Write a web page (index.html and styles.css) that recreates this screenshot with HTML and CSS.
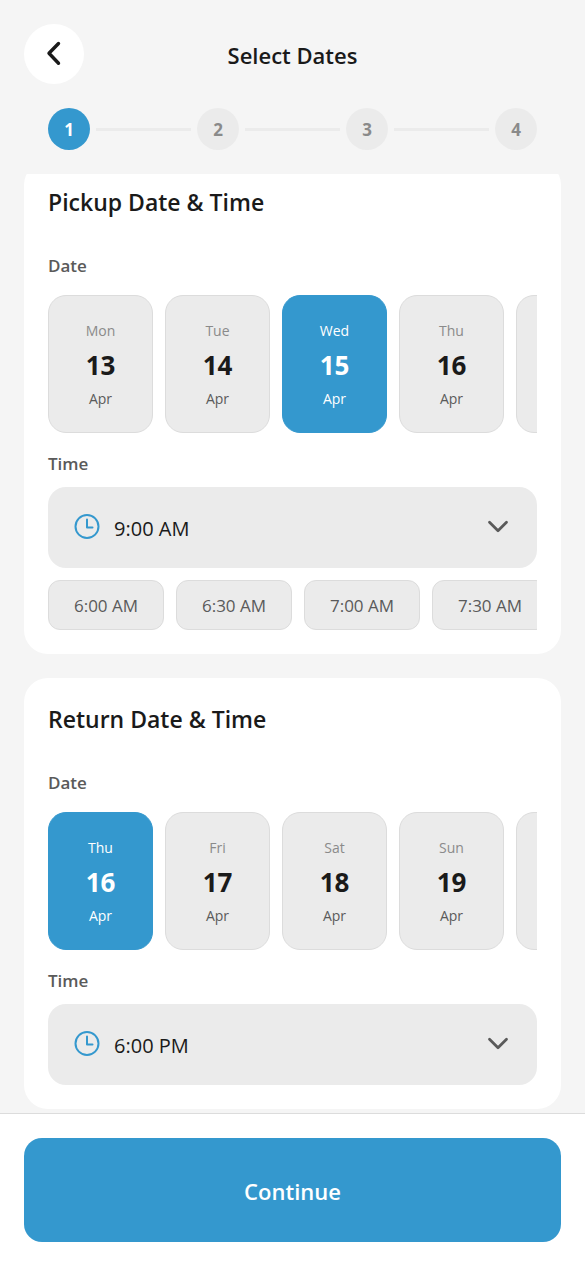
FILE: index.html
```html
<!DOCTYPE html>
<html lang="en">
<head>
    <meta charset="UTF-8">
    <meta name="viewport" content="width=device-width, initial-scale=1.0">
    <title>Select Dates</title>
    <link rel="stylesheet" href="styles.css">
</head>
<body>
    <header class="header">
        <button type="button" class="back-btn" aria-label="Back">
            <svg width="30" height="30" viewBox="0 0 30 30" fill="none" stroke="currentColor" stroke-width="3.4" stroke-linecap="round" stroke-linejoin="round">
                <path d="M19.5 4.5 L10 14.3 L19.5 24.2"/>
            </svg>
        </button>
        <h1>Select Dates</h1>
    </header>

    <div class="steps">
        <div class="step active">1</div>
        <div class="step-line"></div>
        <div class="step">2</div>
        <div class="step-line"></div>
        <div class="step">3</div>
        <div class="step-line"></div>
        <div class="step">4</div>
    </div>

    <main class="content" id="content">
        <section class="card">
            <h2>Pickup Date &amp; Time</h2>
            <h3 class="label">Date</h3>
            <div class="dates">
                <button type="button" class="date"><span class="day">Mon</span><span class="num">13</span><span class="month">Apr</span></button>
                <button type="button" class="date"><span class="day">Tue</span><span class="num">14</span><span class="month">Apr</span></button>
                <button type="button" class="date active"><span class="day">Wed</span><span class="num">15</span><span class="month">Apr</span></button>
                <button type="button" class="date"><span class="day">Thu</span><span class="num">16</span><span class="month">Apr</span></button>
                <button type="button" class="date"><span class="day">Fri</span><span class="num">17</span><span class="month">Apr</span></button>
            </div>
            <label class="label" for="pickupTime">Time</label>
            <div class="time-select">
                <svg class="clock" width="30" height="30" viewBox="0 0 30 30" fill="none" stroke="currentColor" stroke-width="2" stroke-linecap="round" stroke-linejoin="round">
                    <circle cx="15" cy="15.5" r="11.5"/>
                    <path d="M15 8.5 V16.5 H20.5"/>
                </svg>
                <select id="pickupTime">
                    <option>6:00 AM</option>
                    <option>6:30 AM</option>
                    <option>7:00 AM</option>
                    <option>7:30 AM</option>
                    <option selected>9:00 AM</option>
                </select>
                <svg class="chevron" width="30" height="30" viewBox="0 0 30 30" fill="none" stroke="currentColor" stroke-width="2.8" stroke-linecap="round" stroke-linejoin="round">
                    <path d="M6.5 11.3 L15 19.8 L23.5 11.3"/>
                </svg>
            </div>
            <div class="times">
                <button type="button" class="time">6:00 AM</button>
                <button type="button" class="time">6:30 AM</button>
                <button type="button" class="time">7:00 AM</button>
                <button type="button" class="time">7:30 AM</button>
            </div>
        </section>

        <section class="card">
            <h2>Return Date &amp; Time</h2>
            <h3 class="label">Date</h3>
            <div class="dates">
                <button type="button" class="date active"><span class="day">Thu</span><span class="num">16</span><span class="month">Apr</span></button>
                <button type="button" class="date"><span class="day">Fri</span><span class="num">17</span><span class="month">Apr</span></button>
                <button type="button" class="date"><span class="day">Sat</span><span class="num">18</span><span class="month">Apr</span></button>
                <button type="button" class="date"><span class="day">Sun</span><span class="num">19</span><span class="month">Apr</span></button>
                <button type="button" class="date"><span class="day">Mon</span><span class="num">20</span><span class="month">Apr</span></button>
            </div>
            <label class="label" for="returnTime">Time</label>
            <div class="time-select">
                <svg class="clock" width="30" height="30" viewBox="0 0 30 30" fill="none" stroke="currentColor" stroke-width="2" stroke-linecap="round" stroke-linejoin="round">
                    <circle cx="15" cy="15.5" r="11.5"/>
                    <path d="M15 8.5 V16.5 H20.5"/>
                </svg>
                <select id="returnTime">
                    <option>5:30 PM</option>
                    <option selected>6:00 PM</option>
                    <option>6:30 PM</option>
                </select>
                <svg class="chevron" width="30" height="30" viewBox="0 0 30 30" fill="none" stroke="currentColor" stroke-width="2.8" stroke-linecap="round" stroke-linejoin="round">
                    <path d="M6.5 11.3 L15 19.8 L23.5 11.3"/>
                </svg>
            </div>
        </section>
    </main>

    <footer class="footer">
        <button type="button" class="continue-btn">Continue</button>
    </footer>

    <script>
        document.getElementById('content').scrollTop = 13;

        document.querySelectorAll('.dates').forEach(row => {
            row.addEventListener('click', e => {
                const date = e.target.closest('.date');
                if (!date) return;
                row.querySelectorAll('.date').forEach(d => d.classList.remove('active'));
                date.classList.add('active');
            });
        });

        document.querySelectorAll('.time').forEach(btn => {
            btn.addEventListener('click', () => {
                document.getElementById('pickupTime').value = btn.textContent;
            });
        });
    </script>
</body>
</html>
```
FILE: styles.css
```css
* {
    margin: 0;
    padding: 0;
    box-sizing: border-box;
    font-family: "Segoe UI", "Open Sans", "Noto Sans", sans-serif;
}

body {
    display: flex;
    flex-direction: column;
    height: 100vh;
    background-color: #f5f5f5;
    color: #1a1a1a;
}

button {
    border: none;
    cursor: pointer;
}

.header {
    display: grid;
    grid-template-columns: 60px 1fr 60px;
    align-items: center;
    padding: 24px 24px 0;
}

.header h1 {
    padding-top: 2px;
    font-size: 22px;
    font-weight: 600;
    line-height: 34px;
    text-align: center;
}

.back-btn {
    display: flex;
    align-items: center;
    justify-content: center;
    width: 60px;
    height: 60px;
    border-radius: 50%;
    background-color: #fff;
    color: #1a1a1a;
}

.steps {
    display: flex;
    align-items: center;
    gap: 6px;
    padding: 24px 48px;
}

.step {
    width: 42px;
    height: 42px;
    border-radius: 50%;
    background-color: #ebebeb;
    color: #8a8a8a;
    font-size: 17px;
    font-weight: 700;
    line-height: 44px;
    text-align: center;
}

.step.active {
    background-color: #3498ce;
    color: #fff;
}

.step-line {
    flex: 1;
    height: 3px;
    background-color: #ebebeb;
}

.content {
    flex: 1;
    min-height: 0;
    overflow-y: auto;
    scrollbar-width: none;
    padding: 0 24px 24px;
}

.card {
    padding: 24px;
    border-radius: 24px;
    background-color: #fff;
}

.card + .card {
    margin-top: 24px;
}

.card h2 {
    margin-bottom: 34px;
    font-size: 23px;
    font-weight: 600;
    line-height: 34px;
}

.label {
    display: block;
    margin-bottom: 10px;
    color: #5a5a5a;
    font-size: 17px;
    font-weight: 600;
    line-height: 26px;
}

.dates,
.times {
    display: flex;
    gap: 12px;
    overflow-x: auto;
    scrollbar-width: none;
}

.dates {
    margin-bottom: 12px;
    padding: 6px 0;
}

.date {
    display: flex;
    flex: none;
    flex-direction: column;
    align-items: center;
    justify-content: center;
    gap: 6px;
    width: 105px;
    height: 138px;
    padding-top: 2px;
    border: 1px solid #dcdcdc;
    border-radius: 18px;
    background-color: #ebebeb;
    color: #5a5a5a;
}

.day,
.month {
    font-size: 14px;
    line-height: 20px;
}

.day {
    color: #8a8a8a;
}

.num {
    color: #1a1a1a;
    font-size: 26px;
    font-weight: 700;
    line-height: 36px;
}

.date.active {
    border-color: #3498ce;
    background-color: #3498ce;
}

.date.active span {
    color: #fff;
}

.time-select {
    position: relative;
    color: #5a5a5a;
}

.time-select select {
    width: 100%;
    height: 81px;
    padding: 2px 66px 0;
    border: none;
    border-radius: 18px;
    background-color: #ebebeb;
    color: #1a1a1a;
    font-size: 20px;
    appearance: none;
    cursor: pointer;
}

/* icons lie over the select */
.clock,
.chevron {
    position: absolute;
    top: 24px;
    pointer-events: none;
}

.clock {
    left: 24px;
    color: #3498ce;
}

.chevron {
    right: 24px;
}

.times {
    margin-top: 12px;
}

.time {
    flex: none;
    width: 116px;
    height: 50px;
    border: 1px solid #dcdcdc;
    border-radius: 12px;
    background-color: #ebebeb;
    color: #5a5a5a;
    font-size: 17px;
}

.footer {
    padding: 24px;
    border-top: 1px solid #dcdcdc;
    background-color: #fff;
}

.continue-btn {
    width: 100%;
    height: 104px;
    padding-top: 2px;
    border-radius: 18px;
    background-color: #3498ce;
    color: #fff;
    font-size: 22px;
    font-weight: 600;
}
```
